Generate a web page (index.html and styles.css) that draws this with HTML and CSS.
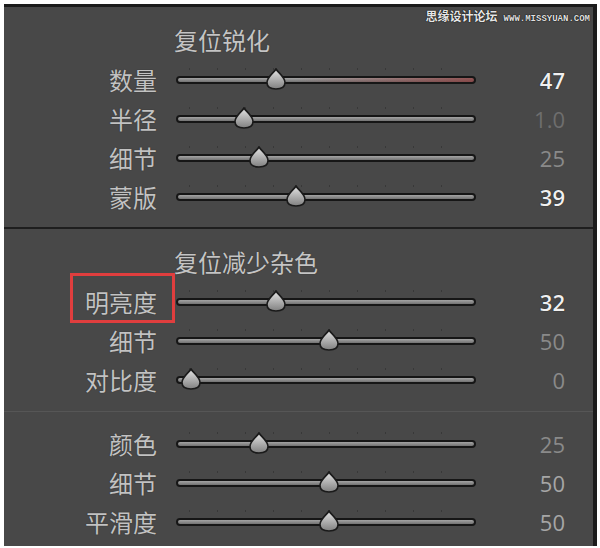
FILE: index.html
```html
<!DOCTYPE html>
<html>
<head>
    <meta charset="utf-8"/>
    <title>细节面板</title>
    <link rel="stylesheet" href="styles.css">
</head>

<body>
<div class="panel">
    <div class="watermark"><span class="wm-cn">思缘设计论坛</span><span class="wm-en">WWW.MISSYUAN.COM</span></div>

    <div class="group">
        <p class="title">复位锐化</p>
        <div class="row">
            <span class="label">数量</span>
            <div class="track track-warm"><span class="thumb" style="left: 98px"></span></div>
            <span class="value strong">47</span>
        </div>
        <div class="row">
            <span class="label">半径</span>
            <div class="track"><span class="thumb" style="left: 66px"></span></div>
            <span class="value dim">1.0</span>
        </div>
        <div class="row">
            <span class="label">细节</span>
            <div class="track"><span class="thumb" style="left: 81px"></span></div>
            <span class="value">25</span>
        </div>
        <div class="row">
            <span class="label">蒙版</span>
            <div class="track"><span class="thumb" style="left: 118px"></span></div>
            <span class="value strong">39</span>
        </div>
    </div>

    <div class="group group-noise">
        <p class="title">复位减少杂色</p>
        <div class="row">
            <span class="label"><span class="mark">明亮度</span></span>
            <div class="track"><span class="thumb" style="left: 98px"></span></div>
            <span class="value strong">32</span>
        </div>
        <div class="row">
            <span class="label">细节</span>
            <div class="track"><span class="thumb" style="left: 151px"></span></div>
            <span class="value">50</span>
        </div>
        <div class="row">
            <span class="label">对比度</span>
            <div class="track"><span class="thumb" style="left: 13px"></span></div>
            <span class="value">0</span>
        </div>
    </div>

    <div class="group group-color">
        <div class="row">
            <span class="label">颜色</span>
            <div class="track"><span class="thumb" style="left: 81px"></span></div>
            <span class="value">25</span>
        </div>
        <div class="row">
            <span class="label">细节</span>
            <div class="track"><span class="thumb" style="left: 151px"></span></div>
            <span class="value light">50</span>
        </div>
        <div class="row">
            <span class="label">平滑度</span>
            <div class="track"><span class="thumb" style="left: 151px"></span></div>
            <span class="value light">50</span>
        </div>
    </div>
</div>
</body>
</html>
```

FILE: styles.css
```css
* {
    margin: 0;
    padding: 0;
    box-sizing: border-box;
}
body {
    width: 600px;
    height: 548px;
    overflow: hidden;
    background: #fff;
    font-family: "Noto Sans CJK SC", sans-serif;
}
.panel {
    position: relative;
    width: 593px;
    height: 542px;
    margin: 4px 0 0 4px;
    background: #484848;
    border-top: 3px solid #1b1b1b;
    border-right: 4px solid #1b1b1b;
}
.watermark {
    position: absolute;
    top: 0;
    right: 3px;
    height: 15px;
    line-height: 15px;
    white-space: nowrap;
}
.wm-cn {
    font-size: 12px;
    font-weight: bold;
    color: #e6e6e6;
    text-shadow: 0 0 1px #000, 0 0 1px #000;
}
.wm-en {
    margin-left: 6px;
    font-family: "Liberation Mono", monospace;
    font-size: 9px;
    font-weight: bold;
    color: #e0e0e0;
    text-shadow: 0 0 1px #000, 0 0 1px #000;
}
.group {
    padding: 18px 0 11px;
}
.group-noise {
    border-top: 2px solid #1e1e1e;
    padding: 18px 0 12px;
}
.group-color {
    border-top: 1px solid #565656;
    padding: 12px 0 0;
}
.title {
    height: 30px;
    line-height: 30px;
    margin: 0 0 5px 170px;
    font-size: 24px;
    color: #c4c4c4;
    text-shadow: 0 0 1px #222;
}
.row {
    display: flex;
    align-items: center;
    height: 39px;
}
.label {
    width: 153px;
    text-align: right;
    font-size: 24px;
    line-height: 39px;
    color: #c2c2c2;
    text-shadow: 0 0 1px #222;
}
.mark {
    position: relative;
    display: inline-block;
    height: 39px;
}
.mark::after {
    content: "";
    position: absolute;
    left: -15px;
    right: -18px;
    top: -9px;
    bottom: -2px;
    border: 3px solid #e03e3e;
}
.track {
    position: relative;
    width: 300px;
    height: 8px;
    margin-left: 19px;
    border: 2px solid #161616;
    border-radius: 4px;
    background: linear-gradient(#a4a4a4, #727272);
}
.track::before {
    content: "";
    position: absolute;
    left: 11px;
    right: 8px;
    top: -10px;
    height: 2px;
    background: repeating-linear-gradient(90deg, #383838 0 1px, transparent 1px 28px);
}
.track-warm {
    background: linear-gradient(90deg, rgba(0, 0, 0, 0) 40%, rgba(140, 55, 55, 0.7) 100%), linear-gradient(#a4a4a4, #727272);
}
.thumb {
    position: absolute;
    top: -10px;
    width: 20px;
    height: 22px;
    margin-left: -10px;
    background: url("data:image/svg+xml,%3Csvg xmlns='http://www.w3.org/2000/svg' width='20' height='22' viewBox='0 0 20 22'%3E%3ClinearGradient id='g' x1='0' y1='0' x2='0' y2='1'%3E%3Cstop offset='0' stop-color='%23e4e4e4'/%3E%3Cstop offset='1' stop-color='%23808080'/%3E%3C/linearGradient%3E%3Cpath d='M10 1C12 4.5 19 9 19 14.5C19 19 15 21 10 21C5 21 1 19 1 14.5C1 9 8 4.5 10 1Z' fill='url(%23g)' stroke='%231a1a1a' stroke-width='1.6'/%3E%3C/svg%3E") no-repeat;
}
.value {
    width: 89px;
    text-align: right;
    font-family: "Open Sans", sans-serif;
    font-size: 22px;
    color: #8a8a8a;
}
.strong {
    font-weight: 600;
    color: #f0f0f0;
    text-shadow: 0 0 1px #000;
}
.dim {
    color: #6e6e6e;
}
.light {
    color: #a6a6a6;
}
```
